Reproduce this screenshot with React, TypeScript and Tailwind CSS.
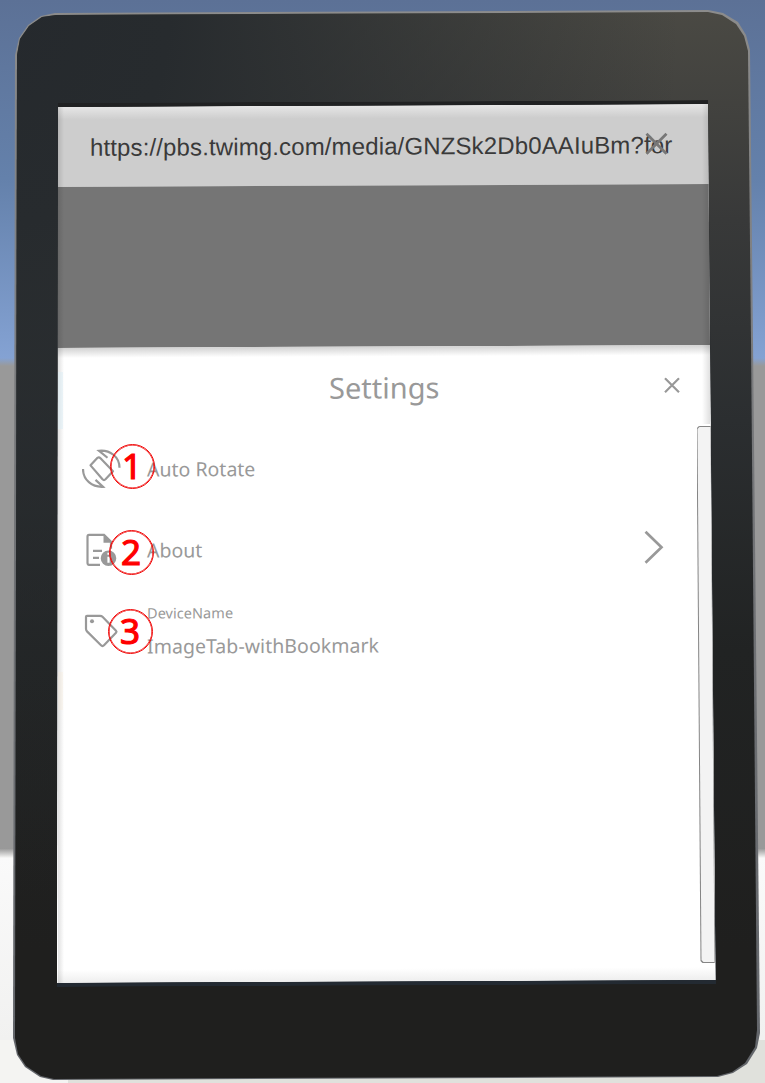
import React from "react";

const stroke = { fill: "none", stroke: "#999", strokeWidth: 2.2 } as const;

function RotateIcon() {
  return (
    <svg className="-mt-[2px]" width="40" height="40" viewBox="82 449 40 40" {...stroke}>
      <path d="M90.500 465.500 L97.500 458 Q99 457 100.500 458.500 L113 471.500 L105.500 479.500 Q104 481 102.500 479.500 Z" strokeLinejoin="round" />
      <path d="M83 469 C83 480 92 487.500 103 487 L95.500 480" />
      <path d="M119.500 468 C119.500 457 110 450 99 451 L107.500 458" />
    </svg>
  );
}

function AboutIcon() {
  return (
    <svg className="-mt-[2px]" width="40" height="40" viewBox="82 530 40 40" {...stroke}>
      <path d="M100 565 H89 Q87.500 565 87.500 563 V537 Q87.500 535 89 535 H104 L111 542 V549" />
      <path d="M103.500 534.500 V543 H112.500 Z" fill="#999" stroke="none" />
      <path d="M93 551 H102 M93 558 H99" />
      <circle cx="108.500" cy="558.500" r="7.800" fill="#999" stroke="none" />
      <path d="M108.500 557 V563 M108.500 553 V555" stroke="#fff" />
    </svg>
  );
}

function TagIcon() {
  return (
    <svg className="-mt-[2px]" width="40" height="40" viewBox="82 611 40 40" {...stroke}>
      <path d="M87 616 H100 Q101.500 616 102.500 617 L116 631 Q117 632 116 633 L104 645.500 Q102.500 647 101 645.500 L87 631.500 Q86 630.500 86 629 V617 Q86 616 87 616 Z" />
      <circle cx="92" cy="621.500" r="2" fill="#999" stroke="none" />
    </svg>
  );
}

function Row({ icon, children }: { icon: React.ReactNode; children: React.ReactNode }) {
  return (
    <li className="flex h-[81px] items-center pl-[25px]">
      {icon}
      <div className="ml-[25px] flex flex-1 items-center justify-between whitespace-nowrap text-[19.5px]">{children}</div>
    </li>
  );
}

function Marker({ n, className }: { n: number; className: string }) {
  return (
    <span
      className={`absolute flex size-[45px] items-center justify-center rounded-full border-[1.5px] border-[#f00a0a] pb-[2px] font-['Noto_Sans',sans-serif] text-[35px] font-normal leading-none text-[#ff0000] shadow-[inset_0_0_0_0.6px_#f00a0a] [-webkit-text-stroke:1.2px_#ff0000] ${className}`}
    >
      {n}
    </span>
  );
}

export default function App() {
  return (
    <main className="relative grid h-[1083px] w-[765px] overflow-hidden bg-[#f4f4f2] font-['Noto_Sans',sans-serif]">
      <div className="[grid-area:1/1]">
        <div className="h-[358px] bg-linear-to-b from-[#5c7196] via-[#6481ab] to-[#84a2d3]" />
        <div className="h-[8px] bg-linear-to-b from-[#84a2d3] to-[#999]" />
        <div className="h-[482px] bg-[#999]" />
        <div className="h-[10px] bg-linear-to-b from-[#949494] to-[#f9f9f8]" />
        <div className="h-[182px] bg-linear-to-b from-[#fafafa] to-[#f1f1f0]" />
        <div className="ml-[68px] h-[43px] bg-[#e0e1dc]" />
      </div>

      <div className="bg-linear-to-b from-[#8c8c8c] via-[#717376] to-[#62656a] [clip-path:polygon(15px_55px,19px_38px,28px_25px,41px_16px,55px_13px,708px_10px,723px_13px,738px_22px,746px_35px,750px_50px,753px_340px,760px_1033px,757px_1048px,747px_1064px,733px_1073px,718px_1077px,53px_1080px,40px_1077px,25px_1067px,17px_1055px,13px_1038px)] [grid-area:1/1]">
        <div className="h-full bg-[radial-gradient(ellipse_680px_900px_at_0px_0px,#25292d_0%,#272b2e_25%,transparent_100%),linear-gradient(180deg,#4b4a44_0px,#383939_220px,#2b2e30_420px,#212323_650px,#1f1f1e_950px)] [clip-path:polygon(17px_55px,20px_39px,29px_26px,42px_17px,56px_15px,708px_12px,722px_15px,736px_24px,744px_36px,748px_51px,751px_340px,757px_1030px,755px_1047px,745px_1063px,732px_1072px,717px_1076px,54px_1079px,41px_1076px,26px_1066px,18px_1054px,15px_1038px)]">
          <div className="pl-[57px] pt-[103px]">
            <div className="h-[884px] w-[659px] origin-top-left skew-y-[-0.26deg] bg-linear-to-b from-[#202122] via-[#25292e] to-[#232a32] [clip-path:polygon(1px_0px,651px_0px,659px_884px,0px_884px)]">
              <div className="pt-[4px]">
                <section className="relative h-[876px] w-[658.500px] bg-white text-[#999] [clip-path:polygon(1px_0px,651px_0px,653px_241px,658.500px_876px,0px_876px)]">
                  <header className="flex h-[80px] items-center bg-[linear-gradient(#e6e6e6,#cdcdcd_13px)] pl-[33px]">
                    <span className="whitespace-nowrap pt-[2px] font-['Liberation_Sans',sans-serif] text-[24px] tracking-[0.13px] text-[#3a3a3a]">
                      https://pbs.twimg.com/media/GNZSk2Db0AAIuBm?for
                    </span>
                    <svg className="absolute left-[588px] top-[28px]" width="23" height="23" viewBox="0 0 23 23">
                      <path d="M1.500 1.500 L21.500 21.500 M21.500 1.500 L1.500 21.500" stroke="#777" strokeWidth="2.800" />
                    </svg>
                  </header>
                  <div className="h-[161px] bg-[#757575]" />
                  <div className="h-[635px] bg-[linear-gradient(#d2d2d2,#fff_10px,#fff_622px,#eee)]">
                    <div className="grid h-[81px] grid-cols-[1fr_110px_1fr] items-center">
                      <h1 className="col-start-2 -ml-[4px] whitespace-nowrap text-center text-[29px]">Settings</h1>
                      <svg className="-mt-[2px] mr-[36px] justify-self-end" width="16" height="16" viewBox="0 0 16 16" {...stroke}>
                        <path d="M1 1 L15 15 M15 1 L1 15" />
                      </svg>
                    </div>
                    <div className="flex">
                      <ul className="flex-1">
                        <Row icon={<RotateIcon />}>Auto Rotate</Row>
                        <Row icon={<AboutIcon />}>
                          About
                          <svg className="-mt-[2px] mr-[33px]" width="20" height="34" viewBox="0 0 20 34" {...stroke} strokeWidth="2.700">
                            <path d="M1.500 1.500 L17.500 17 L1.500 32.500" />
                          </svg>
                        </Row>
                        <Row icon={<TagIcon />}>
                          <div className="-mt-[3px] flex flex-col gap-[10px] leading-[24px]">
                            <span className="text-[14.500px] tracking-[0.05px]">DeviceName</span>
                            <span className="tracking-[0.05px]">ImageTab-withBookmark</span>
                          </div>
                        </Row>
                      </ul>
                      <div className="h-[537px] w-[19px] rounded-[3px] bg-[#858585] [clip-path:polygon(0px_2px,2px_0px,15px_0px,19px_537px,6px_537px,4px_535px)]">
                        <div className="h-full bg-[#f3f3f3] [clip-path:polygon(1px_3px,3px_1px,14px_1px,18px_536px,7px_536px,5px_534px)]" />
                      </div>
                    </div>
                  </div>
                  <div className="absolute inset-y-0 left-px w-[6px] bg-linear-to-r from-black/12 to-transparent" />
                  <div className="absolute left-[645px] top-0 h-[320px] w-[8px] bg-linear-to-l from-black/12 to-transparent" />
                  <div className="absolute left-px top-[265px] h-[57px] w-[5px] bg-[#dceef5]/50" />
                  <div className="absolute left-px top-[565px] h-[38px] w-[5px] bg-[#f8ead8]/30" />
                </section>
              </div>
            </div>
          </div>
        </div>
      </div>

      <Marker n={1} className="left-[109.500px] top-[444px]" />
      <Marker n={2} className="left-[108.500px] top-[530px]" />
      <Marker n={3} className="left-[107.500px] top-[609px]" />
    </main>
  );
}
